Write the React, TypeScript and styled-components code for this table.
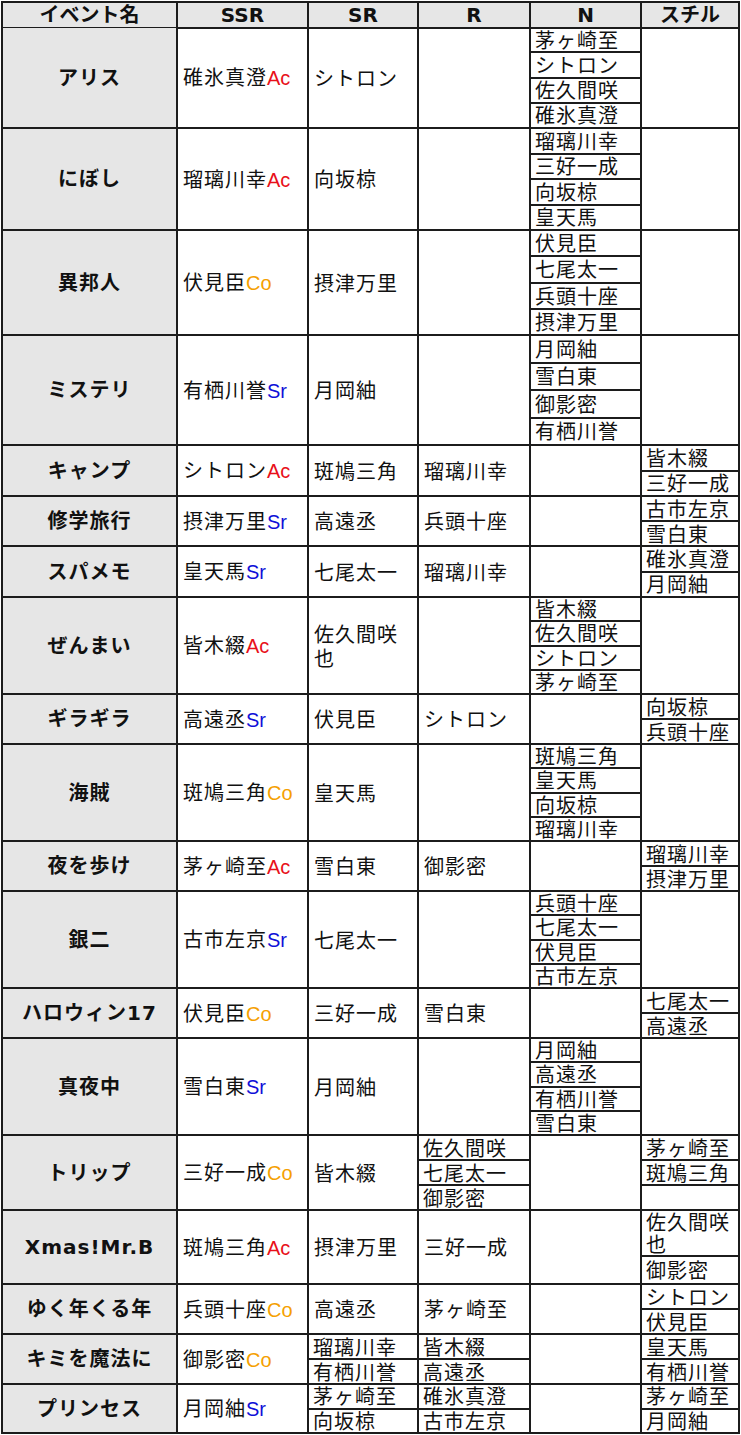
import styled, { createGlobalStyle } from "styled-components"

type Kind = "Ac" | "Co" | "Sr"
type Slot = string | string[] | null

interface EventRow {
    name: string
    ssr: [string, Kind]
    sr: Slot
    r: Slot
    n: Slot
    still: Slot
    h: number
}

const LINE = "#1c1c1c"
const GRAY = "#e6e6e6"
const COLS = "175px 131px 110px 112px 111px 98px"

const TAG_COLORS: Record<Kind, string> = {
    Ac: "#e8101a",
    Co: "#f5a000",
    Sr: "#1010d8",
}

const GlobalStyle = createGlobalStyle`
    html, body {
        margin: 0;
        padding: 0;
        background: #fff;
    }
    body {
        font-family: "Noto Sans CJK JP", sans-serif;
        color: #111;
    }
`

const Table = styled.div`
    margin: 1px 0 0 1px;
    width: fit-content;
    border-left: 2px solid ${LINE};
    border-top: 2px solid ${LINE};
`

const Row = styled.div<{ $h: number }>`
    display: grid;
    grid-template-columns: ${COLS};
    height: ${p => p.$h}px;
`

const Cell = styled.div`
    box-sizing: border-box;
    display: flex;
    align-items: center;
    min-width: 0;
    padding: 0 3px 0 5px;
    border-right: 2px solid ${LINE};
    border-bottom: 2px solid ${LINE};
    font-size: 20px;
    line-height: 24px;
    letter-spacing: 1px;
`

const HeadCell = styled(Cell)`
    justify-content: center;
    padding: 0;
    background: ${GRAY};
    font-family: "DejaVu Sans", "Noto Sans CJK JP", sans-serif;
    font-weight: bold;
    letter-spacing: 0;
`

const EventCell = styled(HeadCell)`
    letter-spacing: 1px;
`

const NestCell = styled(Cell)`
    flex-direction: column;
    align-items: stretch;
    padding: 0;
`

const Item = styled.div`
    flex: 1 1 0;
    display: flex;
    align-items: center;
    padding: 0 2px 0 4px;
    line-height: 22px;
    & + & {
        border-top: 2px solid ${LINE};
    }
`

const Tag = styled.span<{ $kind: Kind }>`
    color: ${p => TAG_COLORS[p.$kind]};
    font-family: "Liberation Sans", Arial, sans-serif;
    letter-spacing: 0;
`

const HEAD = ["イベント名", "SSR", "SR", "R", "N", "スチル"]

const ROWS: EventRow[] = [
    { name: "アリス", ssr: ["碓氷真澄", "Ac"], sr: "シトロン", r: null, n: ["茅ヶ崎至", "シトロン", "佐久間咲", "碓氷真澄"], still: null, h: 101 },
    { name: "にぼし", ssr: ["瑠璃川幸", "Ac"], sr: "向坂椋", r: null, n: ["瑠璃川幸", "三好一成", "向坂椋", "皇天馬"], still: null, h: 102 },
    { name: "異邦人", ssr: ["伏見臣", "Co"], sr: "摂津万里", r: null, n: ["伏見臣", "七尾太一", "兵頭十座", "摂津万里"], still: null, h: 105 },
    { name: "ミステリ", ssr: ["有栖川誉", "Sr"], sr: "月岡紬", r: null, n: ["月岡紬", "雪白東", "御影密", "有栖川誉"], still: null, h: 110 },
    { name: "キャンプ", ssr: ["シトロン", "Ac"], sr: "斑鳩三角", r: "瑠璃川幸", n: null, still: ["皆木綴", "三好一成"], h: 51 },
    { name: "修学旅行", ssr: ["摂津万里", "Sr"], sr: "高遠丞", r: "兵頭十座", n: null, still: ["古市左京", "雪白東"], h: 50 },
    { name: "スパメモ", ssr: ["皇天馬", "Sr"], sr: "七尾太一", r: "瑠璃川幸", n: null, still: ["碓氷真澄", "月岡紬"], h: 51 },
    { name: "ぜんまい", ssr: ["皆木綴", "Ac"], sr: "佐久間咲也", r: null, n: ["皆木綴", "佐久間咲", "シトロン", "茅ヶ崎至"], still: null, h: 97 },
    { name: "ギラギラ", ssr: ["高遠丞", "Sr"], sr: "伏見臣", r: "シトロン", n: null, still: ["向坂椋", "兵頭十座"], h: 50 },
    { name: "海賊", ssr: ["斑鳩三角", "Co"], sr: "皇天馬", r: null, n: ["斑鳩三角", "皇天馬", "向坂椋", "瑠璃川幸"], still: null, h: 97 },
    { name: "夜を歩け", ssr: ["茅ヶ崎至", "Ac"], sr: "雪白東", r: "御影密", n: null, still: ["瑠璃川幸", "摂津万里"], h: 50 },
    { name: "銀二", ssr: ["古市左京", "Sr"], sr: "七尾太一", r: null, n: ["兵頭十座", "七尾太一", "伏見臣", "古市左京"], still: null, h: 97 },
    { name: "ハロウィン17", ssr: ["伏見臣", "Co"], sr: "三好一成", r: "雪白東", n: null, still: ["七尾太一", "高遠丞"], h: 50 },
    { name: "真夜中", ssr: ["雪白東", "Sr"], sr: "月岡紬", r: null, n: ["月岡紬", "高遠丞", "有栖川誉", "雪白東"], still: null, h: 97 },
    { name: "トリップ", ssr: ["三好一成", "Co"], sr: "皆木綴", r: ["佐久間咲", "七尾太一", "御影密"], n: null, still: ["茅ヶ崎至", "斑鳩三角", ""], h: 75 },
    { name: "Xmas!Mr.B", ssr: ["斑鳩三角", "Ac"], sr: "摂津万里", r: "三好一成", n: null, still: ["佐久間咲也", "御影密"], h: 74 },
    { name: "ゆく年くる年", ssr: ["兵頭十座", "Co"], sr: "高遠丞", r: "茅ヶ崎至", n: null, still: ["シトロン", "伏見臣"], h: 50 },
    { name: "キミを魔法に", ssr: ["御影密", "Co"], sr: ["瑠璃川幸", "有栖川誉"], r: ["皆木綴", "高遠丞"], n: null, still: ["皇天馬", "有栖川誉"], h: 50 },
    { name: "プリンセス", ssr: ["月岡紬", "Sr"], sr: ["茅ヶ崎至", "向坂椋"], r: ["碓氷真澄", "古市左京"], n: null, still: ["茅ヶ崎至", "月岡紬"], h: 49 },
]

function SlotCell({ value }: { value: Slot }) {
    if (Array.isArray(value)) {
        return (
            <NestCell>
                {value.map((v, i) => <Item key={i}>{v}</Item>)}
            </NestCell>
        )
    }
    return <Cell>{value}</Cell>
}

export default function App() {
    return (
        <>
            <GlobalStyle />
            <Table>
                <Row $h={25}>
                    {HEAD.map(h => <HeadCell key={h}>{h}</HeadCell>)}
                </Row>
                {ROWS.map(row => (
                    <Row key={row.name} $h={row.h}>
                        <EventCell>{row.name}</EventCell>
                        <Cell>
                            <span>{row.ssr[0]}<Tag $kind={row.ssr[1]}>{row.ssr[1]}</Tag></span>
                        </Cell>
                        <SlotCell value={row.sr} />
                        <SlotCell value={row.r} />
                        <SlotCell value={row.n} />
                        <SlotCell value={row.still} />
                    </Row>
                ))}
            </Table>
        </>
    )
}
